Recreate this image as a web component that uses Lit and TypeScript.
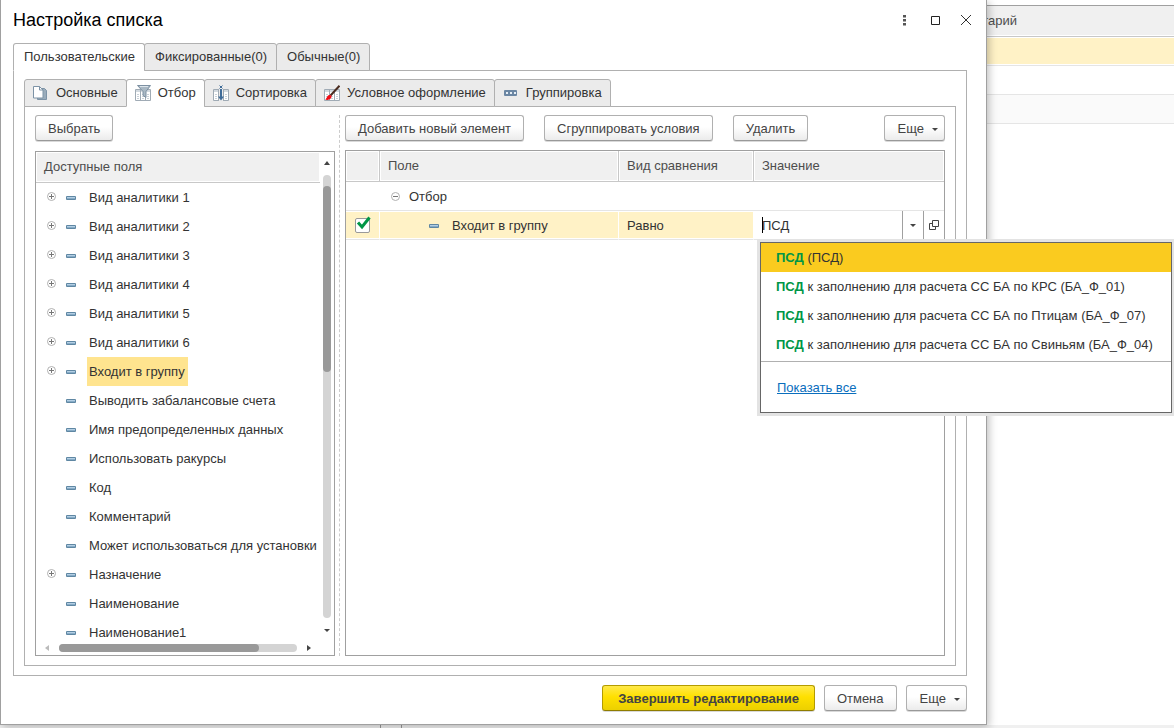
import { LitElement, html, svg, css, nothing } from "lit";
import { customElement, state } from "lit/decorators.js";
import { classMap } from "lit/directives/class-map.js";

interface Field {
  name: string;
  expandable?: boolean;
}

const FIELDS: Field[] = [
  { name: "Вид аналитики 1", expandable: true },
  { name: "Вид аналитики 2", expandable: true },
  { name: "Вид аналитики 3", expandable: true },
  { name: "Вид аналитики 4", expandable: true },
  { name: "Вид аналитики 5", expandable: true },
  { name: "Вид аналитики 6", expandable: true },
  { name: "Входит в группу", expandable: true },
  { name: "Выводить забалансовые счета" },
  { name: "Имя предопределенных данных" },
  { name: "Использовать ракурсы" },
  { name: "Код" },
  { name: "Комментарий" },
  { name: "Может использоваться для установки" },
  { name: "Назначение", expandable: true },
  { name: "Наименование" },
  { name: "Наименование1" },
];

const OUTER_TABS = ["Пользовательские", "Фиксированные(0)", "Обычные(0)"];

const grid = svg`
  <path d="M.5 4.5h15v11H.5z" fill="#fff" stroke="#a0abb5"/>
  <path d="M1 5h14v2H1z" fill="#d3dae0"/>
  <path d="M5.5 5v10M10.5 5v10" stroke="#a0abb5"/>
  <path d="M2 9.5h2M2 11.5h2M2 13.5h2M7 9.5h2M7 11.5h2M7 13.5h2M12 9.5h2M12 11.5h2M12 13.5h2" stroke="#c9d1d8"/>`;

const INNER_TABS = [
  {
    name: "Основные",
    icon: svg`
      <path d="M4.5 3.5h7l2 2v9h-9z" fill="#9aacbb" stroke="#7d93a6"/>
      <path d="M.5 1.500h6l3.500 3.500v8h-9.500z" fill="#fff" stroke="#7d93a6"/>
      <path d="M6.500 1.500v3.500h3.500" fill="none" stroke="#7d93a6"/>`,
  },
  {
    name: "Отбор",
    icon: svg`${grid}
      <path d="M2.500 .5h13L11 6.500v6l-3-2v-4z" fill="#a9b8c4" stroke="#7d90a2"/>
      <path d="M5 1.500h8" stroke="#dde5eb"/>`,
  },
  {
    name: "Сортировка",
    icon: svg`${grid}
      <path d="M6 4h4v12H6z" fill="#ebebeb"/>
      <path d="M8 4v9" stroke="#3f6c99" stroke-width="2"/>
      <path d="M5 11.500h6L8 15.500z" fill="#3f6c99"/>
      <path d="M6.500 .5l3 3M9.500 .5l-3 3" stroke="#3f6c99"/>`,
  },
  {
    name: "Условное оформление",
    icon: svg`${grid}
      <path d="M6.500 10.500L15.500 .8" stroke="#4a2c20" stroke-width="2"/>
      <path d="M1 14.500c2-.5 1.500-3.500 4-4.500 2-.5 3.200 1 2.200 2.800C6 15 3 15.300 1 14.500z" fill="#f00a14"/>`,
  },
  {
    name: "Группировка",
    icon: svg`
      <rect x="1" y="5" width="13" height="6" rx="1" fill="#6b86a3"/>
      <path d="M3 7h2v2H3zM7 7h2v2H7zM11 7h2v2h-2z" fill="#e6eef5"/>`,
  },
];

const SUGGESTIONS = [
  " (ПСД)",
  " к заполнению для расчета СС БА по КРС (БА_Ф_01)",
  " к заполнению для расчета СС БА по Птицам (БА_Ф_07)",
  " к заполнению для расчета СС БА по Свиньям (БА_Ф_04)",
];

const dash = html`<svg class="dash" width="10" height="4" viewBox="0 0 10 4" aria-hidden="true">
  <rect width="10" height="4" rx="1" fill="#5f87a3" />
  <path d="M1 1.500h8" stroke="#b4cfe4" />
  <path d="M1 2.500h8" stroke="#86abc6" />
</svg>`;

const knob = (open: boolean) => html`<svg width="9" height="9" viewBox="0 0 9 9" aria-hidden="true">
  <circle cx="4.5" cy="4.5" r="4" fill="#fff" stroke="#b0b0b0" />
  <path d=${open ? "M2 4.5h5" : "M2 4.5h5M4.5 2v5"} stroke="#777" />
</svg>`;

const arrow = (d: string, color = "#444") => html`<svg width="6" height="6" viewBox="0 0 6 6" aria-hidden="true">
  <path d=${d} fill=${color} />
</svg>`;
const UP = "M0 5L3 1L6 5z";
const DOWN = "M0 2h6L3 5z";
const LEFT = "M5 0v6L1 3z";
const RIGHT = "M1 0v6l4-3z";

@customElement("app-root")
export class AppRoot extends LitElement {
  @state() private outer = 0;
  @state() private inner = 1;
  @state() private selected = 6;
  @state() private option = 0;

  static styles = css`
    :host {
      display: block;
      position: relative;
      height: 100vh;
      overflow: hidden;
      background: #fff;
      color: #333;
      font: 13px/16px "Liberation Sans", Arial, sans-serif;
    }
    * { box-sizing: border-box; }
    button, input { font: inherit; color: inherit; margin: 0; }
    button { padding: 0; border: 0; background: none; white-space: nowrap; }
    svg { display: block; flex: none; }

    .journal { display: flex; flex-direction: column; height: 100%; padding-top: 5px; }
    .journal-head {
      height: 32px;
      padding: 7px 157px 0 0;
      border: solid #c8c8c8;
      border-width: 1px 0;
      border-top-color: #a0a0a0;
      background: #f0f0f0;
      box-shadow: inset 0 -1px #fff;
      color: #4d4d4d;
      text-align: right;
    }
    .line { height: 29px; border-bottom: 1px solid #e5e5e5; }
    .line.current { background: #fff2c6; box-shadow: inset 0 1px #fff, inset 0 -1px #fff; }
    .line.odd { background: #fafafa; }
    .status { display: flex; height: 3px; margin-top: auto; padding-left: 380px; background: #f0f0f0; }
    .status i { width: 22px; border: solid #999; border-width: 0 1px; }

    .dialog {
      position: absolute;
      top: 0;
      left: 0;
      display: flex;
      flex-direction: column;
      width: calc(100% - 187px);
      height: calc(100% - 3px);
      padding: 0 19px 13px 12px;
      border: 1px solid #a0a0a0;
      border-top: 0;
      background: #fff;
      box-shadow: 2px 2px 8px rgba(0, 0, 0, 0.25);
    }
    .title { display: flex; align-items: center; height: 43px; padding-bottom: 3px; }
    h1 { flex: 1; margin: 0; color: #000; font-size: 18px; font-weight: 400; line-height: 24px; }
    .title-tools { display: flex; gap: 15px; margin-right: -7px; }
    .title-tools button { width: 16px; height: 16px; }

    .tabs { display: flex; position: relative; z-index: 1; margin-bottom: -1px; }
    .tab {
      display: flex;
      align-items: center;
      gap: 7px;
      height: 28px;
      margin-right: -1px;
      padding: 0 9px 0 10px;
      border: 1px solid #b0b0b0;
      border-radius: 3px 3px 0 0;
      background: #ebebeb;
    }
    .tab.on { border-bottom-color: #fff; background: #fff; }
    .tabs.icons .tab { padding: 0 8px; }
    .panel {
      display: flex;
      flex: 1;
      flex-direction: column;
      min-height: 0;
      border: 1px solid #b0b0b0;
      padding: 8px 10px 9px;
    }

    .split { display: flex; flex: 1; min-height: 0; }
    .left { display: flex; flex: none; flex-direction: column; align-items: flex-start; gap: 10px; width: 300px; }
    .splitter { flex: none; width: 0; margin: 0 5px 0 4px; border-left: 1px dashed #ccc; }
    .right { display: flex; flex: 1; flex-direction: column; gap: 9px; min-width: 0; }
    .bar { display: flex; gap: 20px; }
    .push { margin-left: auto; }

    .btn {
      display: flex;
      align-items: center;
      gap: 8px;
      height: 26px;
      padding: 2px 12px 0;
      border: 1px solid #b0b0b0;
      border-bottom-color: #999;
      border-radius: 3px;
      background: linear-gradient(#fff 45%, #ebebeb);
      box-shadow: 0 1px rgba(0, 0, 0, 0.15);
      color: #444;
    }
    .btn.more { padding: 2px 6px 0 13px; }
    .btn.main {
      padding: 2px 15px 0;
      border-color: #b39b00;
      border-bottom-color: #8f7c00;
      background: linear-gradient(#ffe94a, #ffe000 45%, #ecd000);
      font-weight: 700;
    }

    .fields {
      display: flex;
      flex: 1;
      width: 100%;
      min-height: 0;
      border: 1px solid #a0a0a0;
    }
    .fields-main { display: flex; flex: 1; flex-direction: column; min-width: 0; }
    .fields-head {
      flex: none;
      height: 31px;
      padding: 7px 8px 0;
      border-bottom: 1px solid #c8c8c8;
      background: #f0f0f0;
      box-shadow: inset 0 0 0 1px #fff;
      color: #4d4d4d;
    }
    .tree { flex: 1; min-height: 0; margin: 0; padding: 0; overflow: hidden; list-style: none; }
    .tree li { display: flex; align-items: center; height: 29px; padding-left: 11px; }
    .knob { flex: none; width: 9px; height: 9px; margin-bottom: 2px; }
    .tree .dash { margin: 1px 0 0 10px; }
    .tree .label { height: 29px; margin-left: 11px; padding: 0 3px 0 2px; }
    .label.on { background: #ffe48f; }

    .vscroll {
      display: flex;
      flex: none;
      flex-direction: column;
      align-items: center;
      gap: 9px;
      width: 14px;
      padding: 8px 0 22px;
    }
    .hscroll { display: flex; flex: none; align-items: center; gap: 9px; height: 15px; padding: 0 8px; }
    .track { flex: 1; border-radius: 4px; background: #d4d4d4; }
    .thumb { border-radius: 4px; background: #999; }
    .vscroll .track { width: 8px; padding-top: 11px; }
    .vscroll .thumb { height: 43%; }
    .hscroll .track { height: 8px; }
    .hscroll .thumb { width: 84%; height: 8px; }

    .filter { flex: 1; min-height: 0; border: 1px solid #a0a0a0; }
    table { width: 100%; border-spacing: 0; table-layout: fixed; }
    .c-use { width: 34px; }
    .c-field { width: 239px; }
    .c-kind { width: 135px; }
    th {
      height: 31px;
      padding: 0 8px;
      border: solid #c8c8c8;
      border-width: 0 1px 1px 0;
      background: #f0f0f0;
      box-shadow: inset 0 0 0 1px #fff;
      color: #4d4d4d;
      font-weight: 400;
      text-align: left;
    }
    th:last-child { border-right: 0; }
    td { height: 29px; padding: 2px 8px 0; border-bottom: 1px solid #e5e5e5; }
    td:first-child { padding-top: 0; }
    .current td {
      border-right: 1px solid #fff;
      background: #fff2c6;
      box-shadow: inset 0 1px #fff, inset 0 -1px #fff;
    }
    .cell { display: flex; align-items: center; }
    .group { gap: 9px; padding-left: 3px; }
    .item { gap: 13px; padding-left: 41px; }
    .check { position: relative; display: block; width: 15px; height: 15px; margin-left: 1px; }
    .check input {
      display: block;
      width: 15px;
      height: 15px;
      appearance: none;
      border: 1px solid #999;
      border-radius: 2px;
      background: #fff;
    }
    .check svg { position: absolute; top: -2px; left: 1px; opacity: 0; pointer-events: none; }
    .check input:checked + svg { opacity: 1; }

    .current td.value { position: relative; padding: 0; border-right: 0; background: #fff; box-shadow: none; }
    .editor { display: flex; height: 28px; }
    .editor input { flex: 1; min-width: 0; padding: 2px 8px 0; border: 0; outline: 0; background: none; }
    .editor button {
      display: flex;
      align-items: center;
      justify-content: center;
      width: 21px;
      border-left: 1px solid #a0a0a0;
    }
    .caret { position: absolute; top: 6px; left: 8px; width: 1px; height: 16px; background: #000; }

    .popup {
      position: absolute;
      z-index: 2;
      top: calc(100% + 3px);
      left: 6px;
      width: 412px;
      border: 1px solid #666;
      background: #fff;
      box-shadow: 0 0 0 3px #e3e3e3;
      white-space: nowrap;
    }
    .popup ul { margin: 0; padding: 0 0 2px; border-bottom: 1px solid #b0b0b0; list-style: none; }
    .popup li { height: 29px; padding: 7px 15px 6px; }
    .popup li.on { background: #facb1f; }
    .popup b { color: #009646; }
    .popup a { display: inline-block; margin: 18px 16px 16px; color: #0a6ebd; }

    .footer { display: flex; justify-content: flex-end; gap: 9px; margin-top: 9px; }
  `;

  private tab(on: boolean, pick: () => void, name: string, icon: unknown = nothing) {
    return html`<button role="tab" aria-selected=${on} class=${classMap({ tab: true, on })} @click=${pick}>${icon}${name}</button>`;
  }

  private fields() {
    return html`<div class="fields">
      <div class="fields-main">
        <div class="fields-head">Доступные поля</div>
        <ul class="tree">
          ${FIELDS.map(
            (f, i) => html`<li>
              ${f.expandable
                ? html`<button class="knob" aria-label="Развернуть">${knob(false)}</button>`
                : html`<span class="knob"></span>`}
              ${dash}
              <button class=${classMap({ label: true, on: i === this.selected })} @click=${() => (this.selected = i)}>${f.name}</button>
            </li>`
          )}
        </ul>
        <div class="hscroll">
          ${arrow(LEFT, "#bbb")}
          <div class="track"><div class="thumb"></div></div>
          ${arrow(RIGHT)}
        </div>
      </div>
      <div class="vscroll">
        ${arrow(UP)}
        <div class="track"><div class="thumb"></div></div>
        ${arrow(DOWN)}
      </div>
    </div>`;
  }

  private popup() {
    return html`<div class="popup">
      <ul role="listbox" aria-label="Значение">
        ${SUGGESTIONS.map(
          (s, i) => html`<li role="option" aria-selected=${i === this.option} class=${classMap({ on: i === this.option })}
            @mouseenter=${() => (this.option = i)}><b>ПСД</b>${s}</li>`
        )}
      </ul>
      <a href="#all">Показать все</a>
    </div>`;
  }

  private filter() {
    return html`<div class="filter">
      <table>
        <colgroup><col class="c-use" /><col class="c-field" /><col class="c-kind" /><col /></colgroup>
        <thead>
          <tr><th></th><th>Поле</th><th>Вид сравнения</th><th>Значение</th></tr>
        </thead>
        <tbody>
          <tr>
            <td></td>
            <td colspan="3"><div class="cell group">
              <button class="knob" aria-label="Свернуть">${knob(true)}</button>Отбор
            </div></td>
          </tr>
          <tr class="current">
            <td><label class="check">
              <input type="checkbox" checked aria-label="Использование" />
              <svg width="15" height="14" viewBox="0 0 15 14" aria-hidden="true">
                <path d="M2 6.500l4 4.500L13.500 1.500" fill="none" stroke="#009646" stroke-width="3" />
              </svg>
            </label></td>
            <td><div class="cell item">${dash}Входит в группу</div></td>
            <td>Равно</td>
            <td class="value">
              <div class="editor">
                <input type="text" value="ПСД" aria-label="Значение" />
                <button aria-label="Выбрать из списка">${arrow(DOWN)}</button>
                <button aria-label="Открыть форму выбора">
                  <svg width="10" height="10" viewBox="0 0 10 10" fill="none" stroke="#444" aria-hidden="true">
                    <path d="M3.500 .5h6v6h-6zM3.500 3.500h-3v6h6v-3" />
                  </svg>
                </button>
              </div>
              <span class="caret"></span>
              ${this.popup()}
            </td>
          </tr>
        </tbody>
      </table>
    </div>`;
  }

  render() {
    return html`
      <div class="journal">
        <div class="journal-head">Комментарий</div>
        <div class="line current"></div>
        <div class="line"></div>
        <div class="line odd"></div>
        <div class="status"><i></i></div>
      </div>
      <section class="dialog" role="dialog" aria-labelledby="title">
        <header class="title">
          <h1 id="title">Настройка списка</h1>
          <div class="title-tools">
            <button aria-label="Меню">
              <svg width="16" height="16" viewBox="0 0 16 16" fill="#555"><path d="M7 3h3v2.500H7zM7 7h3v2.500H7zM7 11h3v2.500H7z" /></svg>
            </button>
            <button aria-label="Развернуть окно">
              <svg width="16" height="16" viewBox="0 0 16 16" fill="none" stroke="#222"><path d="M4.500 4.500h8v8h-8z" /></svg>
            </button>
            <button aria-label="Закрыть">
              <svg width="16" height="16" viewBox="0 0 16 16" fill="none" stroke="#333"><path d="M3 3l10 10M13 3L3 13" /></svg>
            </button>
          </div>
        </header>
        <div class="tabs" role="tablist">
          ${OUTER_TABS.map((t, i) => this.tab(i === this.outer, () => (this.outer = i), t))}
        </div>
        <div class="panel">
          <div class="tabs icons" role="tablist">
            ${INNER_TABS.map((t, i) =>
              this.tab(i === this.inner, () => (this.inner = i), t.name,
                html`<svg width="16" height="16" viewBox="0 0 16 16" aria-hidden="true">${t.icon}</svg>`)
            )}
          </div>
          <div class="panel">
            <div class="split">
              <div class="left">
                <button class="btn">Выбрать</button>
                ${this.fields()}
              </div>
              <div class="splitter"></div>
              <div class="right">
                <div class="bar">
                  <button class="btn">Добавить новый элемент</button>
                  <button class="btn">Сгруппировать условия</button>
                  <button class="btn">Удалить</button>
                  <button class="btn more push">Еще ${arrow(DOWN)}</button>
                </div>
                ${this.filter()}
              </div>
            </div>
          </div>
        </div>
        <footer class="footer">
          <button class="btn main">Завершить редактирование</button>
          <button class="btn">Отмена</button>
          <button class="btn more">Еще ${arrow(DOWN)}</button>
        </footer>
      </section>
    `;
  }
}
